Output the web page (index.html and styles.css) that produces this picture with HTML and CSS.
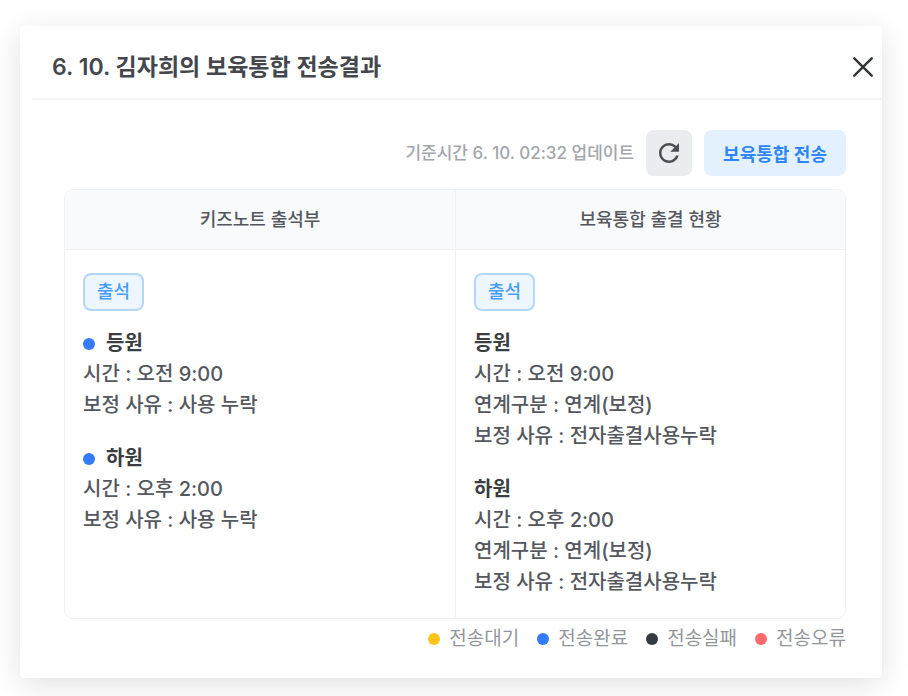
FILE: index.html
```
<!DOCTYPE html>
<html lang="ko">
<head>
    <meta charset="UTF-8">
    <meta name="viewport" content="width=device-width, initial-scale=1.0">
    <title>보육통합 전송결과</title>
    <link rel="stylesheet" href="styles.css">
</head>
<body>
    <div class="modal" role="dialog" aria-labelledby="modal-title">
        <header class="modal-header">
            <h1 id="modal-title">6. 10. 김자희의 보육통합 전송결과</h1>
            <button class="close-btn" type="button" aria-label="닫기">
                <svg width="20" height="20" viewBox="0 0 20 20" fill="none" stroke="#333539" stroke-width="2.4" stroke-linecap="round">
                    <path d="M1.3 1.3l17.4 17.4M18.7 1.3L1.3 18.7"/>
                </svg>
            </button>
        </header>

        <div class="modal-body">
            <div class="toolbar">
                <span class="updated">기준시간 6. 10. 02:32 업데이트</span>
                <button class="btn btn-refresh" type="button" aria-label="새로고침">
                    <svg width="30" height="30" viewBox="0 0 24 24" fill="#4b4f55">
                        <path d="M17.65 6.35C16.2 4.9 14.21 4 12 4c-4.42 0-7.99 3.58-7.99 8s3.57 8 7.99 8c3.73 0 6.84-2.55 7.73-6h-2.08c-.82 2.33-3.04 4-5.65 4-3.31 0-6-2.69-6-6s2.69-6 6-6c1.66 0 3.14.69 4.22 1.78L13 11h7V4l-2.35 2.35z"/>
                    </svg>
                </button>
                <button class="btn btn-send" type="button">보육통합 전송</button>
            </div>

            <table class="result">
                <thead>
                    <tr>
                        <th scope="col">키즈노트 출석부</th>
                        <th scope="col">보육통합 출결 현황</th>
                    </tr>
                </thead>
                <tbody>
                    <tr>
                        <td>
                            <span class="badge">출석</span>
                            <div class="record">
                                <h2><i class="dot done"></i>등원</h2>
                                <p>시간 : 오전 9:00</p>
                                <p>보정 사유 : 사용 누락</p>
                            </div>
                            <div class="record">
                                <h2><i class="dot done"></i>하원</h2>
                                <p>시간 : 오후 2:00</p>
                                <p>보정 사유 : 사용 누락</p>
                            </div>
                        </td>
                        <td>
                            <span class="badge">출석</span>
                            <div class="record">
                                <h2>등원</h2>
                                <p>시간 : 오전 9:00</p>
                                <p>연계구분 : 연계(보정)</p>
                                <p>보정 사유 : 전자출결사용누락</p>
                            </div>
                            <div class="record">
                                <h2>하원</h2>
                                <p>시간 : 오후 2:00</p>
                                <p>연계구분 : 연계(보정)</p>
                                <p>보정 사유 : 전자출결사용누락</p>
                            </div>
                        </td>
                    </tr>
                </tbody>
            </table>

            <ul class="legend">
                <li><i class="dot wait"></i>전송대기</li>
                <li><i class="dot done"></i>전송완료</li>
                <li><i class="dot fail"></i>전송실패</li>
                <li><i class="dot error"></i>전송오류</li>
            </ul>
        </div>
    </div>
</body>
</html>
```
FILE: styles.css
```
* {
    box-sizing: border-box;
}
body {
    margin: 0;
    padding: 26px 26px 18px 20px;
    background: #fff;
    color: #54585e;
    font-family: Inter, "Noto Sans CJK KR", sans-serif;
    font-size: 20px;
    font-weight: 500;
    line-height: 31px;
}
h1, h2, p, ul {
    margin: 0;
    padding: 0;
}
button {
    border: none;
    font-family: inherit;
    cursor: pointer;
}

.modal {
    background: #fff;
    border-radius: 4px;
    box-shadow: 0 6px 30px rgba(0, 0, 0, 0.12);
}
.modal-header {
    display: flex;
    align-items: center;
    justify-content: space-between;
    height: 74px;
    margin-left: 12px;
    padding: 10px 3px 0 20px;
    border-bottom: 2px solid #f5f5f6;
}
.modal-header h1 {
    color: #44474c;
    font-size: 23px;
    font-weight: 600;
}
.close-btn {
    display: flex;
    padding: 6px;
    background: none;
}

.modal-body {
    margin-left: 12px;
    padding: 30px 36px 25px 32px;
}
.toolbar {
    display: flex;
    align-items: center;
    justify-content: flex-end;
    gap: 12px;
    margin-bottom: 13px;
}
.updated {
    color: #a3a6ac;
    font-size: 17px;
}
.btn {
    display: flex;
    align-items: center;
    justify-content: center;
    height: 46px;
    padding: 0;
    border-radius: 8px;
}
.btn-refresh {
    width: 46px;
    background: #ebecef;
}
.btn-send {
    padding: 0 19px;
    background: #e3f1fe;
    color: #2f86f6;
    font-size: 18px;
    font-weight: 600;
}

.result {
    width: 100%;
    border: 1px solid #f0f1f3;
    border-radius: 9px;
    border-spacing: 0;
    table-layout: fixed;
    overflow: hidden;
}
.result th {
    height: 60px;
    padding: 0;
    background: #f8fafc;
    border-bottom: 1px solid #f0f1f3;
    font-size: 18px;
    font-weight: 500;
}
.result td {
    padding: 23px 18px 20px;
    vertical-align: top;
}
.result th + th,
.result td + td {
    border-left: 1px solid #f0f1f3;
}
.badge {
    display: block;
    width: fit-content;
    margin-bottom: 17px;
    padding: 0 12px;
    border: 2px solid #b3d6fc;
    border-radius: 8px;
    background: #edf5fe;
    color: #459cf9;
    font-size: 18px;
    line-height: 34px;
}
.record + .record {
    margin-top: 22px;
}
.record h2 {
    display: flex;
    align-items: center;
    gap: 11px;
    color: #3a3d42;
    font-size: 20px;
    font-weight: 700;
}

.dot {
    width: 12px;
    height: 12px;
    border-radius: 50%;
}
.dot.wait {
    background: #fcc419;
}
.dot.done {
    background: #347bff;
}
.dot.fail {
    background: #343a40;
}
.dot.error {
    background: #ff6b6b;
}

.legend {
    display: flex;
    justify-content: flex-end;
    gap: 18px;
    margin-top: 6px;
    color: #92969b;
    font-size: 19px;
    font-weight: 400;
    line-height: 28px;
    list-style: none;
}
.legend li {
    display: flex;
    align-items: center;
    gap: 9px;
}
```
